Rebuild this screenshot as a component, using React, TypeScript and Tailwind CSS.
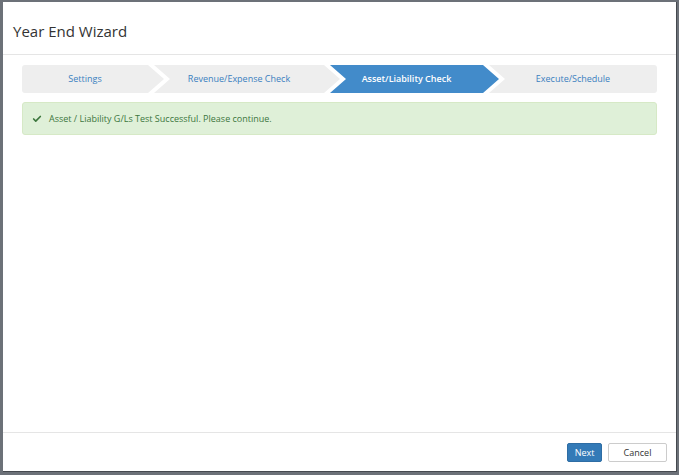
import { Check } from 'lucide-react';

interface WizardStep {
  label: string;
  width: string;
  active?: boolean;
}

const STEPS: WizardStep[] = [
  { label: 'Settings', width: 'w-[142px]' },
  { label: 'Revenue/Expense Check', width: 'w-[186px]' },
  { label: 'Asset/Liability Check', width: 'w-[169px]', active: true },
  { label: 'Execute/Schedule', width: 'w-[168px]' },
];

function StepChevron({ step, index, total }: { step: WizardStep; index: number; total: number }) {
  const first = index === 0;
  const last = index === total - 1;

  // clip each segment into an arrow; neighbours overlap so the white gap reads as a chevron
  const shape = first
    ? '[clip-path:polygon(0_0,calc(100%-16px)_0,100%_50%,calc(100%-16px)_100%,0_100%)] rounded-l-[3px] pr-[16px]'
    : last
      ? '[clip-path:polygon(0_0,100%_0,100%_100%,0_100%,16px_50%)] rounded-r-[3px] -ml-[10px]'
      : '[clip-path:polygon(0_0,calc(100%-16px)_0,100%_50%,calc(100%-16px)_100%,0_100%,16px_50%)] pr-[16px] -ml-[10px]';

  return (
    <div
      className={`${step.width} ${shape} h-[28px] flex items-center justify-center shrink-0 text-[9px] ${
        step.active ? 'bg-[#428bca] text-white font-semibold' : 'bg-[#eeeeee] text-[#3a80c0]'
      }`}
    >
      {step.label}
    </div>
  );
}

export default function App() {
  return (
    <div
      className="w-[679px] h-[475px] bg-[#6c7178] pt-[2px] pl-[3px] overflow-hidden"
      style={{ fontFamily: '"Open Sans", "Noto Sans", Arial, sans-serif' }}
    >
      <div className="w-[674px] h-[470px] bg-white border-r border-b border-[#45494f] flex flex-col">
        {/* header */}
        <div className="h-[53px] border-b border-[#e5e5e5] flex items-center px-[10px]">
          <h1 className="text-[15px] text-[#333333] leading-none pt-[6px]">Year End Wizard</h1>
        </div>

        {/* body */}
        <div className="flex-1 pt-[10px] px-[19px]">
          <div className="flex">
            {STEPS.map((step, i) => (
              <StepChevron key={step.label} step={step} index={i} total={STEPS.length} />
            ))}
          </div>

          <div className="mt-[9px] h-[33px] bg-[#dff0d8] border border-[#d6e9c6] rounded-[3px] flex items-center pl-[9px] text-[9px] text-[#3c763d]">
            <Check className="w-[10px] h-[10px] mr-[7px]" strokeWidth={4} />
            <span>Asset / Liability G/Ls Test Successful. Please continue.</span>
          </div>
        </div>

        {/* footer */}
        <div className="h-[39px] border-t border-[#e5e5e5] flex items-center justify-end gap-[6px] pr-[9px]">
          <button
            type="button"
            className="h-[19px] w-[35px] bg-[#337ab7] border border-[#2e6da4] rounded-[2px] text-white text-[9px] leading-none"
          >
            Next
          </button>
          <button
            type="button"
            className="h-[19px] w-[59px] bg-white border border-[#cccccc] rounded-[2px] text-[#333333] text-[9px] leading-none"
          >
            Cancel
          </button>
        </div>
      </div>
    </div>
  );
}
